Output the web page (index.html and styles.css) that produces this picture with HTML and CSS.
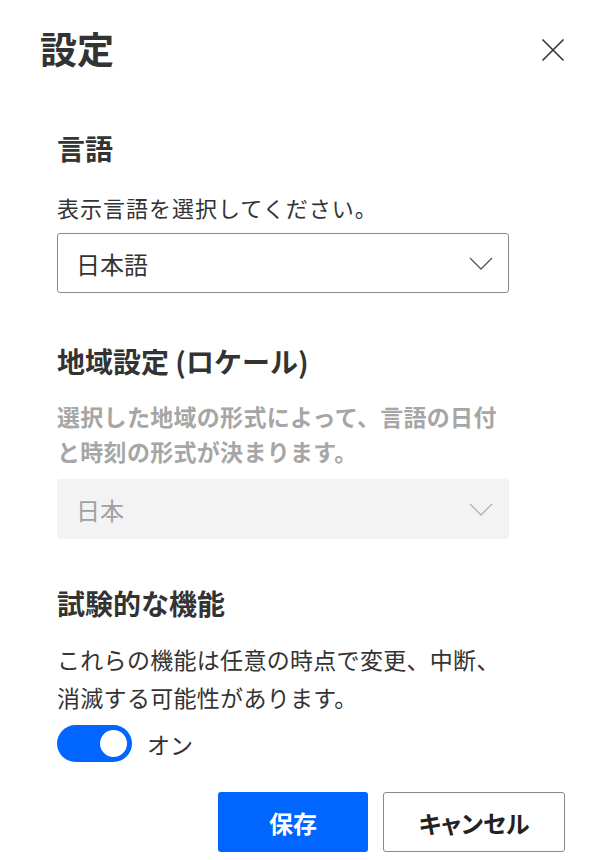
FILE: index.html
```html
<!DOCTYPE html>
<html lang="ja">
<head>
    <meta charset="UTF-8">
    <meta name="viewport" content="width=device-width, initial-scale=1.0">
    <title>設定</title>
    <link rel="stylesheet" href="styles.css">
</head>
<body>
    <div class="panel">
        <div class="panel-header">
            <h1>設定</h1>
            <button class="close-btn" aria-label="閉じる">
                <svg width="24" height="24" viewBox="0 0 24 24">
                    <path d="M1.5 1.5 L22.5 22.5 M22.5 1.5 L1.5 22.5" stroke="#333" stroke-width="1.6" fill="none"/>
                </svg>
            </button>
        </div>

        <div class="section section-lang">
            <h2>言語</h2>
            <p class="desc">表示言語を選択してください。</p>
            <div class="select">
                <span>日本語</span>
                <svg class="chevron" width="24" height="13" viewBox="0 0 24 13">
                    <polyline points="1,1 12,12 23,1" stroke="#555" stroke-width="1.3" fill="none"/>
                </svg>
            </div>
        </div>

        <div class="section section-locale">
            <h2>地域設定 (ロケール)</h2>
            <p class="desc muted">選択した地域の形式によって、言語の日付と時刻の形式が決まります。</p>
            <div class="select disabled">
                <span>日本</span>
                <svg class="chevron" width="24" height="13" viewBox="0 0 24 13">
                    <polyline points="1,1 12,12 23,1" stroke="#b0b0b0" stroke-width="1.3" fill="none"/>
                </svg>
            </div>
        </div>

        <div class="section section-beta">
            <h2>試験的な機能</h2>
            <p class="desc long">これらの機能は任意の時点で変更、中断、消滅する可能性があります。</p>
            <div class="toggle-row">
                <span class="toggle on"><span class="knob"></span></span>
                <span class="toggle-label">オン</span>
            </div>
        </div>

        <div class="actions">
            <button class="btn btn-primary">保存</button>
            <button class="btn btn-default">キャンセル</button>
        </div>
    </div>
</body>
</html>
```

FILE: styles.css
```css
body {
    margin: 0;
    background: #fff;
    font-family: "Noto Sans CJK JP", "Noto Sans", sans-serif;
    color: #333;
}

.panel {
    width: 525px;
    padding: 24px 0 0 40px;
}

.panel-header {
    display: flex;
    justify-content: space-between;
    align-items: center;
}

.panel-header h1 {
    margin: 0;
    font-size: 37px;
    line-height: 48px;
    font-weight: bold;
}

.close-btn {
    background: none;
    border: none;
    padding: 0;
    width: 24px;
    height: 24px;
    margin-top: 4px;
    cursor: pointer;
}

.close-btn svg {
    display: block;
}

.section {
    margin-left: 17px;
    width: 452px;
}

.section-lang {
    margin-top: 58px;
}

.section-locale {
    margin-top: 50px;
}

.section-beta {
    margin-top: 46px;
}

.section h2 {
    margin: 0;
    font-size: 28px;
    line-height: 36px;
    font-weight: bold;
}

.desc {
    margin: 23px 0 8px;
    font-size: 22px;
    line-height: 36px;
    letter-spacing: 1px;
}

.muted {
    color: #a6a6a6;
    font-weight: bold;
    font-size: 23px;
    letter-spacing: 0.3px;
    line-height: 35px;
    margin: 20px 0 10px;
}

.long {
    font-size: 23px;
    letter-spacing: 0.3px;
    line-height: 38px;
    margin: 19px 0 9px;
}

.select {
    height: 60px;
    box-sizing: border-box;
    border: 1px solid #8a8a8a;
    border-radius: 3px;
    padding: 0 15px 0 18px;
    display: flex;
    align-items: center;
    justify-content: space-between;
    font-size: 24px;
    color: #333;
}

.select.disabled {
    background: #f3f3f3;
    border-color: #f3f3f3;
    color: #a0a0a0;
}

.chevron {
    display: block;
}

.toggle-row {
    display: flex;
    align-items: center;
    gap: 15px;
}

.toggle {
    width: 75px;
    height: 37px;
    border-radius: 19px;
    background: #c8c8c8;
    box-sizing: border-box;
    padding: 5px;
    display: flex;
    justify-content: flex-start;
}

.toggle.on {
    background: #0066ff;
    justify-content: flex-end;
}

.knob {
    width: 27px;
    height: 27px;
    border-radius: 50%;
    background: #fff;
}

.toggle-label {
    font-size: 23px;
}

.actions {
    display: flex;
    justify-content: flex-end;
    gap: 15px;
    margin-top: 30px;
}

.btn {
    height: 60px;
    border-radius: 3px;
    font-family: inherit;
    font-size: 24px;
    font-weight: bold;
    cursor: pointer;
}

.btn-primary {
    width: 150px;
    background: #0066ff;
    border: none;
    color: #fff;
}

.btn-default {
    width: 182px;
    background: #fff;
    border: 1px solid #8a8a8a;
    color: #222;
    font-feature-settings: "palt";
}
```
